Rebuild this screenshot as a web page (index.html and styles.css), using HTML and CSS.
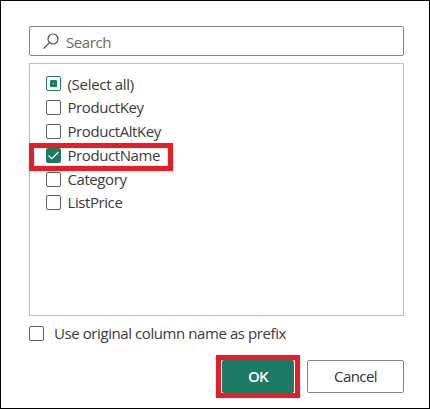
FILE: index.html
```html
<!DOCTYPE html>
<html lang="en">
<head>
<meta charset="utf-8">
<title>Expand columns</title>
<link rel="stylesheet" href="styles.css">
</head>
<body>
<main class="dialog">
  <div class="search">
    <svg class="search-icon" width="17" height="17" viewBox="0 0 17 17"><circle cx="10" cy="6" r="5"/><path d="M6.5 9.7L0.5 15.7"/></svg>
    <span>Search</span>
  </div>
  <div class="list">
    <div class="item all"><span class="box partial"></span><span>(Select all)</span></div>
    <div class="item"><span class="box"></span><span>ProductKey</span></div>
    <div class="item"><span class="box"></span><span>ProductAltKey</span></div>
    <div class="item marked"><span class="box checked"><svg width="15" height="15" viewBox="0 0 15 15"><path d="M2.5 7.5L5.7 10.7L12.5 4"/></svg></span><span>ProductName</span></div>
    <div class="item"><span class="box"></span><span>Category</span></div>
    <div class="item last"><span class="box"></span><span>ListPrice</span></div>
  </div>
  <div class="prefix"><span class="box"></span><span>Use original column name as prefix</span></div>
  <div class="actions">
    <div class="ok-mark"><button class="btn ok">OK</button></div>
    <button class="btn cancel">Cancel</button>
  </div>
</main>
</body>
</html>
```
FILE: styles.css
```css
*, *::before, *::after { box-sizing: border-box; }
body {
  margin: 0;
  background: #fff;
  color: #3b3a39;
  font: 15px/20px "Open Sans", "Noto Sans", sans-serif;
  letter-spacing: -0.42px;
  white-space: nowrap;
}
.dialog {
  width: 430px;
  height: 409px;
  border: 1px solid #000;
  padding: 25px 25px 0 28px;
}
.search {
  display: flex;
  align-items: center;
  height: 30px;
  padding-left: 13px;
  border: 1px solid #858585;
  border-radius: 2px;
  color: #6b6967;
}
.search span { margin: 1px 0 0 6px; }
.search-icon { margin-top: 1px; fill: none; stroke: #4a4a55; stroke-width: 1.2; }
.list {
  height: 253px;
  margin-top: 7px;
  padding: 8px 0 0 16px;
  border: 1px solid #c0c0c0;
}
.item { display: flex; align-items: flex-start; height: 24px; padding-top: 4px; position: relative; }
.item span + span { margin: -3px 0 0 6.5px; }
.all span + span { margin-top: -2px; letter-spacing: -0.3px; }
.last { margin-top: -1px; }
.box {
  flex: none;
  width: 15px;
  height: 15px;
  border: 1px solid #605e5c;
  border-radius: 2px;
  background: #fff;
}
.partial {
  display: grid;
  place-items: center;
  border-color: #1d7a64;
}
.partial::before {
  content: "";
  width: 7px;
  height: 7px;
  border: 3px solid #1d7a64;
  border-radius: 1px;
  background: #d5e8e3;
}
.checked { border: 0; background: #1d7a64; }
.checked svg { display: block; fill: none; stroke: #fff; stroke-width: 1.2; }
.marked::after {
  content: "";
  position: absolute;
  left: -17px;
  top: -1px;
  width: 144px;
  height: 28px;
  border: 5px solid #ed1c24;
}
.prefix { display: flex; align-items: flex-start; height: 20px; margin-top: 8px; padding-top: 2px; }
.prefix span + span { margin: -3px 0 0 10px; }
.actions { display: flex; justify-content: flex-end; align-items: center; gap: 7px; margin-top: 11px; }
.ok-mark { width: 84px; height: 43px; padding: 0 1px; border: 5px solid #ed1c24; background: #fff; }
.btn {
  display: block;
  height: 33px;
  padding: 0 0 2px;
  border-radius: 2px;
  font: 600 15px/20px "Open Sans", "Noto Sans", sans-serif;
  letter-spacing: -0.6px;
}
.ok { width: 72px; border: 0; background: #1d7a64; color: #fff; }
.cancel { width: 97px; border: 1px solid #858585; background: #fff; color: #323130; font-weight: 500; }
```
